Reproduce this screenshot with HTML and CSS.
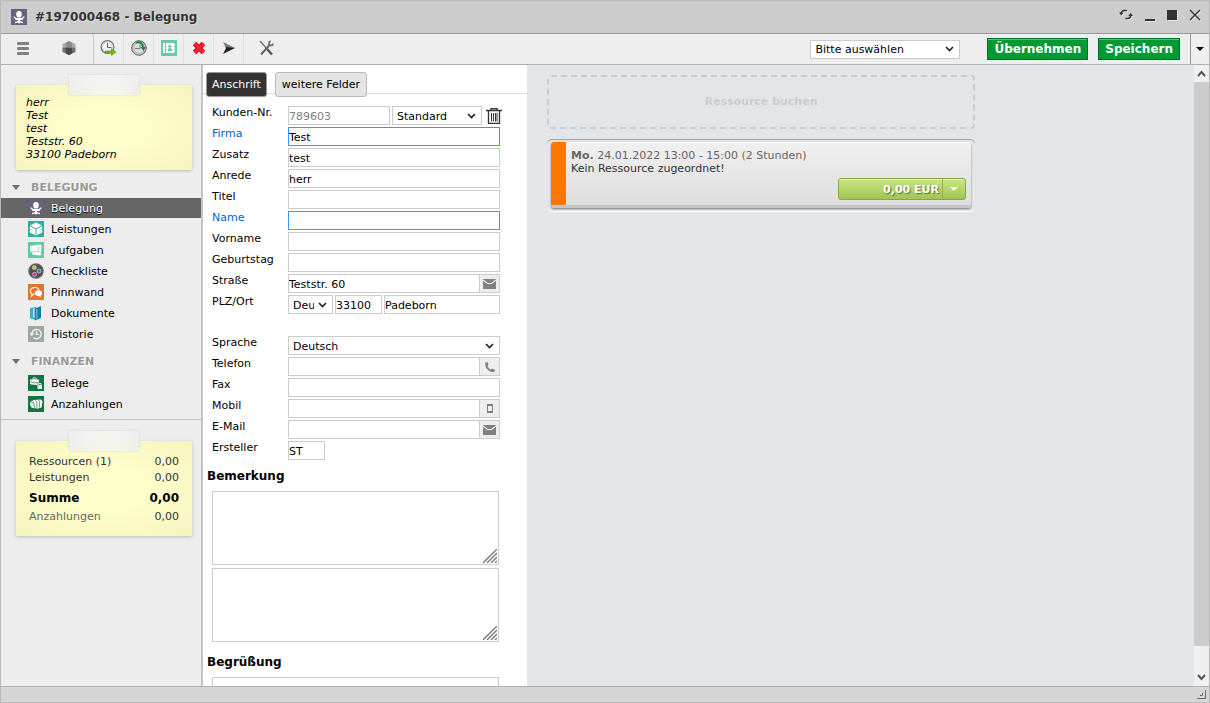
FILE: index.html
```html
<!DOCTYPE html>
<html lang="de">
<head>
<meta charset="utf-8">
<title>#197000468 - Belegung</title>
<link rel="stylesheet" href="styles.css">
</head>
<body>
<svg class="defs" aria-hidden="true">
  <symbol id="i-chair" viewBox="0 0 16 16"><rect width="16" height="16" fill="#66637a"/><path fill="#fff" d="M8 2c1.700 0 2.800 1.200 2.800 3S10 8.500 9.300 8.500H6.700C6 8.500 5.200 6.800 5.200 5S6.300 2 8 2zM2.500 7.500h1.300l1.200 1.500h6l1.200-1.500h1.300v1.200h-.8L11.500 11H9v1l3 1v1.300L9 13.500v.8H7v-.8l-3 .8V13l3-1v-1H4.500L3.300 8.700h-.8z"/></symbol>
  <symbol id="i-cube" viewBox="0 0 16 16"><rect width="16" height="16" fill="#36ada2"/><path fill="#fff" d="M8 1.500L14 4.500v7L8 14.500 2 11.500v-7z"/><path fill="none" stroke="#36ada2" d="M2 4.700L8 8l6-3.300M8 8v6.500"/></symbol>
  <symbol id="i-task" viewBox="0 0 16 16"><rect width="16" height="16" fill="#5fcba6"/><path fill="#fff" d="M2 4l7-1 .5-.5 4 .5-.5 8.500.5 1.500-3 .5L4 12.500 4.500 11 2.500 10z"/><path fill="none" stroke="#5fcba6" stroke-width=".6" d="M3 10.200l7-.8 1-6M10 9.500l3 1.500"/></symbol>
  <symbol id="i-check" viewBox="0 0 16 16"><circle cx="8" cy="8" r="7.800" fill="#6a6a6a"/><circle cx="8" cy="8" r="6.600" fill="#505050"/><g stroke="#ddd" stroke-width=".7"><circle cx="6.300" cy="4.600" r="2" fill="#a5cc24"/><circle cx="11" cy="8" r="2" fill="#3173d4"/><circle cx="6.500" cy="11.300" r="2" fill="#e6168a"/></g></symbol>
  <symbol id="i-pin" viewBox="0 0 16 16"><rect width="16" height="16" fill="#e2762b"/><path fill="none" stroke="#fff" stroke-width="1.200" d="M7 10H5.500L3.500 12v-2.500C1 7 3 3.500 6.500 3.500c3 0 4.500 1.500 4.500 3"/><path fill="#fff" d="M10.500 6.300c2 0 3.500 1.200 3.500 3 0 1.100-.6 1.900-1.300 2.400l.3 1.800-1.700-1.300C8.600 12.300 7 11 7 9.300s1.500-3 3.500-3z"/></symbol>
  <symbol id="i-doc" viewBox="0 0 16 16"><path fill="#45a9c8" d="M2 3l6-1v12l-1 1-5-2z"/><path fill="#b9e1ed" d="M5 3.500l1.500-.5v10L5 12.500z"/><path fill="#167ea4" d="M7 3.500L13 1v12l-6 2.500z"/><path fill="#5fb9d4" d="M8 4.500l1.500-.6v9.600L8 14z"/></symbol>
  <symbol id="i-hist" viewBox="0 0 16 16"><rect width="16" height="16" fill="#99ab9f"/><path fill="none" stroke="#fff" stroke-width="1.200" d="M3.800 8a4.700 4.700 0 1 1 1.600 3.600M8.500 5v3.500h2.500"/><path fill="#fff" d="M1.500 7.500h4.600L3.800 10z"/></symbol>
  <symbol id="i-beleg" viewBox="0 0 16 16"><rect width="16" height="16" fill="#147540"/><path fill="#fff" d="M2 4.500h2.500V3.500Q4.500 2.500 5.500 2.500h2q1 0 1 1v1H11v3.500H9.500V10L3 9.500 2 8.500z"/><path fill="none" stroke="#147540" stroke-width=".7" d="M5.500 4.500V3.500h2v1M2 6.500l4.500 1.500 4.500-1"/><path fill="#e4f2e8" d="M9.500 10H14v4H9.500z"/><path fill="none" stroke="#e4f2e8" d="M10.500 10V8.500h2.500V10"/></symbol>
  <symbol id="i-pay" viewBox="0 0 16 16"><rect width="16" height="16" fill="#147540"/><path fill="#fff" d="M2 6l4-2 7-.5 1.500 2-1 6L10 12.500l-6-.5-1.500-2z"/><path fill="none" stroke="#147540" stroke-width=".7" d="M3 6.500l3 .3.500 5M7.500 4.300L9 6.500l-.2 5.500M10.500 4l1.200 2-.4 5.500"/></symbol>
  <symbol id="i-mail" viewBox="0 0 13 10"><path fill="#808080" d="M0 0h13v10H0z"/><path fill="none" stroke="#eee" stroke-width="1.200" d="M0 1l4.500 3.500h4L13 1"/></symbol>
  <symbol id="i-arrow" viewBox="0 0 8 5"><path d="M0 0h8L4 5z" fill="currentColor"/></symbol>
  <symbol id="i-grip" viewBox="0 0 14 14"><path fill="none" stroke="#777" stroke-width="1.400" d="M0 14L14 0M4 14L14 4M8 14l6-6M12 14l2-2"/></symbol>
</svg>

<div class="window">
  <header class="titlebar">
    <svg class="icon"><use href="#i-chair"/></svg>
    <h1>#197000468 - Belegung</h1>
    <div class="controls">
      <button aria-label="Aktualisieren"><svg width="14" height="12" viewBox="0 0 14 12"><path fill="none" stroke="#333" stroke-width="1.500" d="M8 1.500H5C3 2 2.200 3 2.300 4.500M6.500 9.500H9c2-.5 2.800-1.500 2.700-3"/><path fill="#333" d="M0 3.500h4.600L2.300 6.500zM9.400 7H14l-2.300-3z"/></svg></button>
      <button aria-label="Minimieren"><svg width="10" height="12"><path fill="#333" d="M0 10h10v2H0z"/></svg></button>
      <button aria-label="Maximieren"><svg width="10" height="12"><path fill="#333" d="M0 1h10v10H0z"/></svg></button>
      <button aria-label="Schließen"><svg width="12" height="12" viewBox="0 0 12 12"><path fill="none" stroke="#333" stroke-width="1.400" d="M1 1l10 10M11 1L1 11"/></svg></button>
    </div>
  </header>

  <div class="toolbar">
    <button class="tool tool-wide" aria-label="Menü"><svg width="12" height="13"><g fill="#808080"><rect width="12" height="3" rx="1"/><rect y="5" width="12" height="3" rx="1"/><rect y="10" width="12" height="3" rx="1"/></g></svg></button>
    <button class="tool tool-last" aria-label="Ressource"><svg width="14" height="14" viewBox="0 0 14 14"><path fill="#a8a8a8" d="M7 0l6.500 3v4H.5V3z"/><path fill="#8a8a8a" d="M4 2l3-2 3 2v6H4z"/><path fill="#6e6e6e" d="M.5 7L4 6.500h6l3.500.5v4L7 14 .5 11z"/><path fill="#484848" d="M4 7h6v5.500L7 14l-3-1.500z"/></svg></button>
    <button class="tool" aria-label="Verschieben"><svg width="18" height="16" viewBox="0 0 18 16"><circle cx="7.500" cy="7" r="6.400" fill="#f1f1f1" stroke="#777" stroke-width="1.200"/><circle cx="7.500" cy="7" r="4.800" fill="none" stroke="#aaa" stroke-dasharray="1 2"/><path fill="none" stroke="#666" d="M7.500 3v4.500h4"/><path fill="#79b51c" stroke="#578a0b" stroke-width=".5" d="M5 11h6.500V8.500l4.500 3.500-4.500 3.500V13H5z"/></svg></button>
    <button class="tool" aria-label="Verlauf"><svg width="18" height="16" viewBox="0 0 18 16"><circle cx="9" cy="8" r="7.300" fill="#c4c4c4" stroke="#666"/><circle cx="9" cy="8" r="5.200" fill="#ddd" stroke="#999" stroke-dasharray="1 1.500"/><path d="M5 8.500h5V5" fill="none" stroke="#777"/><path fill="none" stroke="#168845" stroke-width="2" d="M6 2.500q6-1 7 4.500"/><path fill="#168845" d="M10.500 7H16l-2.500 4z"/></svg></button>
    <button class="tool" aria-label="Adressbuch"><svg width="16" height="16" viewBox="0 0 16 16"><path fill="#62cdaa" d="M0 0h16v16H0z"/><path fill="#fff" d="M2 3h2v10H2zM5 3h8v10H5z"/><path fill="#fff" d="M13 4h1v2h-1zM13 7h1v2h-1zM13 10h1v2h-1z"/><circle cx="8.800" cy="6.300" r="1.600" fill="#62cdaa"/><path fill="#62cdaa" d="M6.500 11q0-3 2.300-3t2.300 3z"/></svg></button>
    <button class="tool" aria-label="Löschen"><svg width="14" height="14" viewBox="0 0 14 14"><path stroke="#d90017" stroke-width="4.600" d="M2.500 2.500l9 9M11.500 2.500l-9 9"/><path stroke="#fb2733" stroke-width="2" d="M2.500 2.500l9 9M11.500 2.500l-9 9"/></svg></button>
    <button class="tool" aria-label="Senden"><svg width="14" height="12" viewBox="0 0 14 12"><path fill="#777" d="M1 0l12 6H4z"/><path fill="#222" d="M3.500 5L13 6 1 12l3-6z"/></svg></button>
    <button class="tool tool-settings" aria-label="Einstellungen"><svg width="15" height="16" viewBox="0 0 15 16"><path stroke="#777" stroke-width="1.500" d="M1 1l7 8"/><path stroke="#555" stroke-width="2.500" d="M8 9l5 5.500"/><path stroke="#666" stroke-width="2" d="M2 14.500L10.500 5"/><path fill="none" stroke="#666" stroke-width="1.700" d="M11.500 1C9.500 2 9.500 4.500 11 5.200s3-.2 3.200-1.700"/></svg></button>
    <select class="field action" aria-label="Aktion"><option>Bitte auswählen</option></select>
    <button class="primary">Übernehmen</button>
    <button class="primary">Speichern</button>
    <button class="more" aria-label="Mehr"><svg width="8" height="4" viewBox="0 0 8 5" preserveAspectRatio="none"><path d="M0 0h8L4 5z"/></svg></button>
  </div>

  <main class="content">
    <aside class="sidebar">
      <div class="note address">
        <span class="tape"></span>
        <address>herr<br>Test<br>test<br>Teststr. 60<br>33100 Padeborn</address>
      </div>
      <nav class="menu">
        <h2><svg class="tri"><use href="#i-arrow"/></svg>BELEGUNG</h2>
        <a class="active" href="#"><svg class="icon"><use href="#i-chair"/></svg>Belegung</a>
        <a href="#"><svg class="icon"><use href="#i-cube"/></svg>Leistungen</a>
        <a href="#"><svg class="icon"><use href="#i-task"/></svg>Aufgaben</a>
        <a href="#"><svg class="icon"><use href="#i-check"/></svg>Checkliste</a>
        <a href="#"><svg class="icon"><use href="#i-pin"/></svg>Pinnwand</a>
        <a href="#"><svg class="icon"><use href="#i-doc"/></svg>Dokumente</a>
        <a href="#"><svg class="icon"><use href="#i-hist"/></svg>Historie</a>
        <h2><svg class="tri"><use href="#i-arrow"/></svg>FINANZEN</h2>
        <a href="#"><svg class="icon"><use href="#i-beleg"/></svg>Belege</a>
        <a href="#"><svg class="icon"><use href="#i-pay"/></svg>Anzahlungen</a>
      </nav>
      <div class="note">
        <span class="tape"></span>
        <table class="totals">
          <tr><td>Ressourcen (1)</td><td>0,00</td></tr>
          <tr><td>Leistungen</td><td>0,00</td></tr>
          <tr class="sum"><td>Summe</td><td>0,00</td></tr>
          <tr class="paid"><td>Anzahlungen</td><td>0,00</td></tr>
        </table>
      </div>
    </aside>

    <section class="panel">
      <div class="tabs"><button class="tab current">Anschrift</button><button class="tab">weitere Felder</button></div>
      <form class="form">
        <div class="row"><label for="nr">Kunden-Nr.</label><div class="cell"><input id="nr" class="field number" value="789603"><select class="field kind" aria-label="Kundenart"><option>Standard</option></select><button type="button" class="trash" aria-label="Kunde entfernen"><svg width="16" height="16" viewBox="0 0 16 16"><path fill="none" stroke="#333" stroke-width="1.300" d="M0 2.500h16M5 2.500v-2h6v2M2.500 3v12.300h11V3"/><path stroke="#333" d="M5.500 5v8.500M7.500 5v8.500M9.500 5v8.500M11 5v8.500"/></svg></button></div></div>
        <div class="row required"><label for="firma">Firma</label><div class="cell"><input id="firma" class="field" value="Test"></div></div>
        <div class="row"><label for="zusatz">Zusatz</label><div class="cell"><input id="zusatz" class="field" value="test"></div></div>
        <div class="row"><label for="anrede">Anrede</label><div class="cell"><input id="anrede" class="field" value="herr"></div></div>
        <div class="row"><label for="titel">Titel</label><div class="cell"><input id="titel" class="field"></div></div>
        <div class="row required"><label for="name">Name</label><div class="cell"><input id="name" class="field"></div></div>
        <div class="row"><label for="vorname">Vorname</label><div class="cell"><input id="vorname" class="field"></div></div>
        <div class="row"><label for="geb">Geburtstag</label><div class="cell"><input id="geb" class="field"></div></div>
        <div class="row"><label for="str">Straße</label><div class="cell joined"><input id="str" class="field" value="Teststr. 60"><button type="button" class="addon" aria-label="Brief"><svg width="13" height="10"><use href="#i-mail"/></svg></button></div></div>
        <div class="row spaced"><label for="plz">PLZ/Ort</label><div class="cell"><select class="field land" aria-label="Land"><option>Deutschland</option></select><input id="plz" class="field plz" value="33100"><input class="field" aria-label="Ort" value="Padeborn"></div></div>
        <div class="row"><label for="spr">Sprache</label><div class="cell"><select id="spr" class="field"><option>Deutsch</option></select></div></div>
        <div class="row"><label for="tel">Telefon</label><div class="cell joined"><input id="tel" class="field"><button type="button" class="addon" aria-label="Anrufen"><svg width="12" height="12" viewBox="0 0 12 12"><path fill="#808080" d="M1.500 1.500L3.500 1l1 2.500L3.500 5q1 2.500 3 3.500L8 7.500l3 1.500v1.500C6 12.500 0 7 1.500 1.500z"/></svg></button></div></div>
        <div class="row"><label for="fax">Fax</label><div class="cell"><input id="fax" class="field"></div></div>
        <div class="row"><label for="mob">Mobil</label><div class="cell joined"><input id="mob" class="field"><button type="button" class="addon" aria-label="SMS"><svg width="6" height="9"><path fill="#808080" fill-rule="evenodd" d="M0 0h6v9H0zM1 2v5h4V2z"/></svg></button></div></div>
        <div class="row"><label for="mail">E-Mail</label><div class="cell joined"><input id="mail" class="field"><button type="button" class="addon" aria-label="E-Mail schreiben"><svg width="13" height="10"><use href="#i-mail"/></svg></button></div></div>
        <div class="row"><label for="erst">Ersteller</label><div class="cell"><input id="erst" class="field short" value="ST"></div></div>
        <h3>Bemerkung</h3>
        <div class="memo"><textarea aria-label="Bemerkung"></textarea><svg class="grip"><use href="#i-grip"/></svg></div>
        <div class="memo"><textarea aria-label="Bemerkung intern"></textarea><svg class="grip"><use href="#i-grip"/></svg></div>
        <h3>Begrüßung</h3>
        <div class="memo"><textarea aria-label="Begrüßung"></textarea><svg class="grip"><use href="#i-grip"/></svg></div>
      </form>
    </section>

    <section class="board">
      <button class="drop">Ressource buchen</button>
      <div class="tray">
        <article class="card">
          <div class="card-body">
            <p class="when"><b>Mo.</b> 24.01.2022 13:00 - 15:00 (2 Stunden)</p>
            <p>Kein Ressource zugeordnet!</p>
            <div class="price"><button>0,00 EUR</button><button aria-label="Preisoptionen"><svg width="8" height="4" viewBox="0 0 8 5" preserveAspectRatio="none"><path fill="#fff" d="M0 0h8L4 5z"/></svg></button></div>
          </div>
        </article>
      </div>
    </section>

    <div class="scroll">
      <button aria-label="Nach oben"><svg width="9" height="7"><path d="M1 6l3.500-4L8 6"/></svg></button>
      <div class="thumb"></div>
      <button aria-label="Nach unten"><svg width="9" height="7"><path d="M1 1l3.500 4L8 1"/></svg></button>
    </div>
  </main>

  <footer class="status"><svg width="10" height="10"><path fill="none" stroke="#666" d="M0 8.500h8.500V0M3 5.500h2.500V3"/></svg></footer>
</div>
</body>
</html>
```
FILE: styles.css
```css
* { box-sizing: border-box; }
body { margin: 0; font: 11px/13px "DejaVu Sans", Verdana, sans-serif; color: #000; }
button, input, select, textarea { font: inherit; color: inherit; margin: 0; }
button { display: flex; align-items: center; justify-content: center; padding: 0; border: 0; background: none; }
svg { display: block; flex: none; }
h1, h2, h3, p { margin: 0; }
.defs { position: absolute; width: 0; height: 0; }
.icon { width: 16px; height: 16px; }

.window { display: flex; flex-direction: column; height: 100vh; border: 1px solid #bababa; overflow: hidden; background: #ededed; }
.titlebar { display: flex; align-items: center; gap: 8px; height: 33px; flex: none; padding: 0 8px 0 10px; background: #ccc; border-bottom: 1px solid #999; }
.titlebar h1 { font-size: 12px; line-height: 16px; color: #333; text-shadow: 1px 1px 0 #ddd; }
.controls { display: flex; gap: 12px; margin-left: auto; padding-bottom: 4px; }
.controls svg { filter: drop-shadow(1px 1px 0 #e6e6e6); }

.toolbar { display: flex; align-items: center; height: 31px; flex: none; background: #eee; border-bottom: 1px solid #b0b0b0; }
.tool { width: 30px; height: 30px; padding-bottom: 2px; border-right: 1px solid #e0e0e0; }
.tool-wide { width: 44px; border: 0; }
.tool-last { width: 49px; border-color: #c8c8c8; }
.tool-settings { width: 45px; border: 0; }
.primary { height: 22px; padding: 0 6px; margin-right: 10px; font-size: 12px; font-weight: bold; color: #fff; background: #093; border: 1px solid #006d24; box-shadow: inset 0 1px 0 #5dc17e; }
.more { width: 19px; height: 30px; border-left: 1px solid #999; }

.field { width: 100%; min-width: 0; height: 19px; padding: 1px 0 0; border: 1px solid #ccc; border-radius: 0; background-color: #fff; outline: 0; }
select.field { appearance: none; padding: 1px 16px 0 4px; background-image: url("data:image/svg+xml,%3Csvg xmlns='http://www.w3.org/2000/svg' width='9' height='6'%3E%3Cpath d='M1 1l3.500 3.500L8 1' fill='none' stroke='%23222' stroke-width='1.700'/%3E%3C/svg%3E"); background-repeat: no-repeat; background-position: right 5px center; }
.field.action { width: 150px; margin-left: auto; margin-right: 27px; }

.content { display: grid; grid-template-columns: 202px 324px minmax(0, 1fr) 15px; flex: 1; min-height: 0; }
.content > * { min-height: 0; overflow: hidden; }
.sidebar { border-right: 2px solid #c4c4c4; padding-top: 20px; display: flex; flex-direction: column; }
.note { position: relative; margin: 0 9px 0 15px; background: radial-gradient(ellipse at center, #ffc 30%, #f6f4c0 100%); box-shadow: 0 1px 3px #bbb; }
.tape { position: absolute; left: 53px; top: -10px; width: 70px; height: 20px; background: linear-gradient(90deg, #f0f0f0, #f6f6f2 60%, #efefef); opacity: .9; box-shadow: 0 0 2px #ccc; }
.address { padding: 11px 10px 9px; }
address { font-style: oblique; }
.menu { margin-top: 7px; padding-bottom: 5px; border-bottom: 1px solid #c4c4c4; display: flex; flex-direction: column; gap: 1px; }
.menu h2 { display: flex; align-items: center; gap: 11px; height: 20px; padding-left: 11px; font-size: 11px; color: #999; text-shadow: 1px 1px 0 #fff; }
.menu h2:not(:first-child) { margin: 6px 0 1px; }
.tri { width: 8px; height: 5px; color: #776f69; }
.menu a { display: flex; align-items: center; gap: 7px; height: 20px; padding-left: 27px; color: #000; text-decoration: none; }
.menu a.active { background: #666; color: #fff; text-shadow: 0 1px 1px #000; }
.menu + .note { margin-top: 21px; padding: 12px 13px; }
.totals { width: 100%; border-collapse: collapse; color: #333; }
.totals td { padding: 0; height: 16px; }
.totals td + td { text-align: right; }
.totals .sum td { height: 23px; padding-top: 4px; font-size: 12px; font-weight: bold; color: #000; }
.totals .paid td:first-child { color: #666; }

.panel { background: #fff; padding-top: 7px; }
.tabs { display: flex; gap: 8px; height: 22px; padding-left: 3px; border-bottom: 1px solid #ddd; }
.tab { height: 25px; flex: none; padding: 0 6px; border: 1px solid #bbb; border-radius: 3px; background: #e4e4e4; }
.tab.current { padding: 0 5px; background: #333; color: #fff; border-color: #999; }
.form { padding: 12px 27px 0 9px; }
.row { display: grid; grid-template-columns: 76px minmax(0, 1fr); align-items: start; margin-bottom: 2px; }
.spaced { margin-bottom: 22px; }
.cell { display: flex; gap: 2px; }
.required label { color: #06c; }
.required .field { border-color: #39f; }
.field.number { width: 102px; flex: none; color: #808080; }
.field.kind { width: 90px; flex: none; }
.trash { width: 18px; height: 19px; margin-left: 1px; margin-right: -21px; }
.field.land { width: 45px; flex: none; padding-right: 18px; }
.field.plz { width: 47px; flex: none; }
.field.short { width: 37px; }
.joined { gap: 0; }
.addon { width: 20px; height: 19px; flex: none; border: 1px solid #ccc; border-left: 0; background: #eee; }
.form h3 { margin: 9px 0 7px -5px; font-size: 12px; line-height: 15px; }
.memo { position: relative; margin-bottom: 3px; margin-right: 1px; }
.form .memo + h3 { margin-top: 13px; }
.memo textarea { display: block; width: 100%; height: 74px; border: 1px solid #ccc; resize: none; outline: 0; }
.grip { position: absolute; right: 2px; bottom: 2px; width: 14px; height: 14px; }

.board { padding: 10px 20px; background: #e3e6e9; }
.drop { width: 100%; max-width: 428px; height: 54px; padding-bottom: 2px; border: 2px dashed #ccc; border-radius: 4px; font-weight: bold; color: #ccc; }
.tray { max-width: 428px; margin-top: 10px; padding: 3px 4px; border-radius: 5px; box-shadow: inset 0 1px 0 #a0a4a8, 0 1px 0 #fff; }
.card { border-radius: 3px; overflow: hidden; background: linear-gradient(#f0f0f0, #dedede); border-bottom: 3px solid #c6c6c6; box-shadow: 0 1px 2px #777, inset 0 1px 0 #fff; }
.card-body { padding: 7px 5px 5px; border-left: 15px solid #f70; color: #333; }
.when { color: #666; }
.price { display: flex; width: 128px; height: 22px; margin: 3px 0 0 auto; border: 1px solid #86a844; border-radius: 3px; background: linear-gradient(#c8e584, #a1c653); box-shadow: inset 0 1px 0 #e1f2ad; }
.price button { width: 22px; font-weight: bold; color: #fff; text-shadow: 1px 1px 1px #58702a; }
.price button:first-child { flex: 1; justify-content: flex-end; padding-right: 3px; border-right: 1px solid #8fb04d; }

.scroll { display: flex; flex-direction: column; background: #f0f0f0; }
.scroll button { height: 17px; flex: none; }
.scroll path { fill: none; stroke: #555; stroke-width: 2; }
.thumb { flex: 1; margin-bottom: 23px; background: #ccc; }
.status { display: flex; align-items: flex-end; justify-content: flex-end; height: 16px; flex: none; padding: 2px; background: #d6d6d6; border-top: 1px solid #b0b0b0; }
```
